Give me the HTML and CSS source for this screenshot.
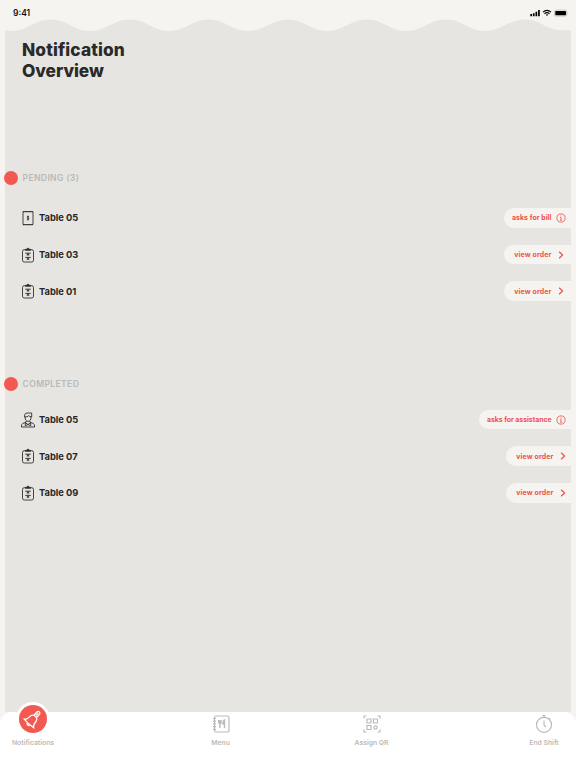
FILE: index.html
```html
<!DOCTYPE html>
<html lang="en">
<head>
  <meta charset="UTF-8">
  <title>Notification Overview</title>
  <link rel="stylesheet" href="styles.css">
</head>
<body>
  <!-- shared icons -->
  <svg class="sprite" xmlns="http://www.w3.org/2000/svg">
    <symbol id="order" viewBox="0 0 14 16">
      <rect x="1.5" y="2.7" width="11" height="12.3" rx="1.8"/>
      <path d="M4.300 3.200V2.400h1.500a1.200 1.200 0 0 1 2.400 0h1.500v.8z" fill="#303030"/>
      <path d="M4.200 6.200h5.600M4.200 10.400h5.600M5.700 8h2.600M5.700 12.200h2.600"/>
      <path d="M7 6.200v1.800M7 10.400v1.800" stroke-width="1.600"/>
    </symbol>
    <symbol id="info" viewBox="0 0 10 10">
      <circle cx="5" cy="5" r="4.100"/>
      <path d="M4.100 4.300H5v2.800M4.100 7.200h1.900M5 2.400v.9"/>
    </symbol>
    <symbol id="arrow" viewBox="0 0 10 10">
      <path d="M3.100 1.700 6.600 5 3.100 8.300" stroke-width="1.200"/>
    </symbol>
  </svg>

  <header class="status">
    <span class="time">9:41</span>
    <svg class="signals" width="39" height="8" viewBox="0 0 39 8">
      <path d="M.3 5h1.700v2.200H.3zM2.900 4.200h1.700v3H2.900zM5.500 2.700h1.700v4.500H5.500zM8.100 1.100h1.700v6.100H8.100z"/>
      <path class="wave" d="M13 3.100q4-3.500 8 0M14.500 4.700q2.500-2 5 0"/>
      <path d="M15.800 5.700q1.200-.9 2.400 0L17 7z"/>
      <rect class="case" x="24.500" y="1.100" width="12.300" height="6" rx="1.500"/>
      <rect x="25.300" y="1.900" width="10.700" height="4.400" rx=".7"/>
      <path class="cap" d="M37.400 3.200q1 .9 0 1.800z"/>
    </svg>
  </header>

  <main class="panel">
    <svg class="edge" width="566" height="12" viewBox="5 19 566 12">
      <path d="M5 31V30.200Q8 30.900 11.500 30.900C28.500 30.900 34 19.400 51 19.400S73 30.900 90 30.900 113 19.400 130 19.400 152 30.900 169 30.900 192 19.400 209 19.400 231 30.900 248 30.900 271 19.400 288 19.400 310 30.900 327 30.900 350 19.400 367 19.400 389 30.900 406 30.900 429 19.400 446 19.400 468 30.900 485 30.900 508 19.400 525 19.400 545 30.200 563 30.200H571V31z"/>
    </svg>
    <h1><span class="first">Notification</span><br>Overview</h1>

    <section class="pending">
      <h2>PENDING (3)</h2>
      <div class="row">
        <svg class="icon" viewBox="0 0 14 16">
          <path d="M2 1.600h10v13H2z"/>
          <path d="M2 1.600h10M2 14.600h10" stroke-width="1.400" stroke-dasharray="1 .7"/>
          <path d="M8 6.700Q6.200 6 6.200 7.200c0 .8 1.700.7 1.700 1.600Q7.800 9.900 6 9.200M7 5.700v4.800"/>
        </svg>
        <span class="table">Table 05</span>
        <a class="pill">asks for bill <svg><use href="#info"/></svg></a>
      </div>
      <div class="row">
        <svg class="icon"><use href="#order"/></svg>
        <span class="table">Table 03</span>
        <a class="pill view">view order <svg><use href="#arrow"/></svg></a>
      </div>
      <div class="row">
        <svg class="icon"><use href="#order"/></svg>
        <span class="table">Table 01</span>
        <a class="pill view">view order <svg><use href="#arrow"/></svg></a>
      </div>
    </section>

    <section class="completed">
      <h2>COMPLETED</h2>
      <div class="row">
        <svg class="icon" viewBox="0 0 14 16">
          <path d="M3.600 5.200V3.100Q4 1 6 1h4.700v4.200M3.600 4.900Q6.500 5.200 7.700 3.700q1 1.100 2.900 1M4.100 5c-.2 2.600 1.200 4.400 2.900 4.400S10.200 7.600 10 5"/>
          <path d="M5 8.900v1.500l-3 .8Q.400 11.800.400 15h13.200q0-3.200-1.600-3.800l-3-.8V8.900M4.300 10.800 7 12.500l2.700-1.700v3L7 12.500l-2.700 1.300z"/>
        </svg>
        <span class="table">Table 05</span>
        <a class="pill">asks for assistance <svg><use href="#info"/></svg></a>
      </div>
      <div class="row">
        <svg class="icon"><use href="#order"/></svg>
        <span class="table">Table 07</span>
        <a class="pill view slim">view order <svg><use href="#arrow"/></svg></a>
      </div>
      <div class="row">
        <svg class="icon"><use href="#order"/></svg>
        <span class="table">Table 09</span>
        <a class="pill view slim">view order <svg><use href="#arrow"/></svg></a>
      </div>
    </section>
  </main>

  <nav class="tabs">
    <a class="tab bell">
      <svg width="34" height="34" viewBox="0 0 34 34">
        <circle cx="17" cy="17" r="17" fill="#fff"/>
        <circle cx="17" cy="17" r="14" fill="#f15951"/>
        <g transform="translate(16.500 17.500) rotate(42)">
          <path d="M-6.300 5.300Q-4 3.500-4 .4C-4-2.800-2.500-4.300 0-4.300S4-2.800 4 .4Q4 3.500 6.300 5.300Q0 6.500-6.300 5.300zM-1.800 5.800a1.900 1.900 0 0 0 3.700 0M-1.700-4.500V-8.500a1.700 1.700 0 0 1 3.400 0v4M0-8.500v3"/>
        </g>
      </svg>
      <span>Notifications</span>
    </a>
    <a class="tab menu">
      <svg width="18" height="18" viewBox="0 0 18 18">
        <rect x="2.500" y="1" width="14.500" height="16" rx="1.500"/>
        <path d="M1 3.500h3M1 6.200h3M1 8.900h3M1 11.600h3M1 14.300h3"/>
        <path d="M6.700 5v2.500q0 1.200 1.200 1.200T9.100 7.500V5M7.900 5v8M12.500 13V5q-1.500.7-1.500 4h1.500" stroke-width="1.400"/>
      </svg>
      <span>Menu</span>
    </a>
    <a class="tab qr">
      <svg width="18" height="18" viewBox="0 0 18 18">
        <path d="M1 3.500V1h2.500M14.500 1H17v2.500M1 14.500V17h2.500M17 14.500V17h-2.500"/>
        <path d="M4 4h4v4H4zM10.500 4h4v4h-4zM4 10.500h4v4H4z"/>
        <circle cx="12.500" cy="12.500" r="1.700"/>
      </svg>
      <span>Assign QR</span>
    </a>
    <a class="tab shift">
      <svg width="18" height="18" viewBox="0 0 18 18">
        <circle cx="9" cy="9.800" r="7.500"/>
        <path d="M7.500.7h3M9 .7v1.700M9 5.500V10l2 2M14.200 4l1-1"/>
      </svg>
      <span>End Shift</span>
    </a>
  </nav>
</body>
</html>
```

FILE: styles.css
```css
* {
  box-sizing: border-box;
}
body {
  margin: 0;
  height: 768px;
  display: flex;
  flex-direction: column;
  background: #f5f4f0;
  font-family: Inter, "Open Sans", sans-serif;
  overflow: hidden;
}
svg {
  fill: none;
  flex: none;
  display: block;
}
.sprite {
  position: absolute;
  width: 0;
  height: 0;
}

/* status bar */
.status {
  height: 19px;
  padding: 7px 7px 0 13px;
  display: flex;
  justify-content: space-between;
}
.time {
  font-size: 8.5px;
  line-height: 12px;
  font-weight: 600;
  color: #111;
}
.signals {
  margin-top: 2px;
  fill: #000;
}
.signals .wave {
  fill: none;
  stroke: #000;
  stroke-width: 1.2;
}
.signals .case {
  fill: none;
  stroke: #aaa;
  stroke-width: .6;
}
.signals .cap {
  fill: #aaa;
}

/* panel */
.panel {
  flex: 1;
  margin: 0 5px;
  background: linear-gradient(#f5f4f0 12px, #e6e5e1 12px);
}
.edge {
  fill: #e6e5e1;
}
h1 {
  margin: 7.5px 0 0 17px;
  height: 42px;
  font-size: 17.3px;
  line-height: 21px;
  font-weight: 800;
  letter-spacing: -.05px;
  color: #2a2a2a;
}
h1 .first {
  letter-spacing: .12px;
}
h2 {
  margin: 0;
  height: 14px;
  display: flex;
  align-items: center;
  font-size: 8.6px;
  line-height: 14px;
  font-weight: 600;
  letter-spacing: .35px;
  color: #bab9b6;
}
h2::before {
  content: "";
  width: 14px;
  height: 14px;
  margin: 0 5px 0 -1.5px;
  border-radius: 50%;
  background: #f15951;
}
.pending {
  margin-top: 90.5px;
}
.completed {
  margin-top: 67px;
}
.row {
  height: 36.7px;
  padding-left: 15.5px;
  display: flex;
  align-items: center;
}
.pending h2 + .row {
  margin-top: 14.5px;
}
.completed h2 + .row {
  margin-top: 10.7px;
}
.icon {
  width: 14px;
  height: 16px;
  stroke: #303030;
  stroke-width: .9;
}
.table {
  margin-left: 4.5px;
  font-size: 9.3px;
  font-weight: 700;
  color: #262626;
}
.pill {
  margin-left: auto;
  width: 67px;
  height: 19.7px;
  padding-right: 5px;
  display: flex;
  align-items: center;
  justify-content: flex-end;
  border-radius: 10px 0 0 10px;
  background: #f5f4f0;
  color: #ef514b;
  font-size: 6.9px;
  font-weight: 700;
  letter-spacing: .07px;
  white-space: nowrap;
}
.pill svg {
  width: 10px;
  height: 10px;
  margin-left: 4.5px;
  stroke: #ef514b;
  stroke-width: .8;
}
.pill.view {
  letter-spacing: .16px;
}
.completed h2 + .row .pill {
  width: 92px;
  letter-spacing: -.03px;
}
.pill.slim {
  width: 65px;
  padding-right: 3px;
}

/* bottom tabs */
.tabs {
  height: 56.5px;
  display: flex;
  border-radius: 12px 12px 0 0;
  background: #fff;
}
.tab {
  width: 60px;
  display: flex;
  flex-direction: column;
  align-items: center;
  color: #bcbbb7;
  font-size: 6.8px;
  font-weight: 600;
}
.tab svg {
  height: 18px;
  margin-top: 3.5px;
  stroke: #bcbbb7;
  stroke-width: 1.2;
}
.tab span {
  margin-top: 5px;
  line-height: 9px;
}
.tab.bell {
  margin-left: 3px;
}
.tab.bell svg {
  height: 34px;
  margin-top: -9.5px;
  stroke: none;
}
.tab.bell path {
  stroke: #fff;
  stroke-width: 1.3;
}
.tab.bell span {
  margin-top: 2px;
}
.menu {
  margin-left: 127.5px;
}
.qr {
  margin-left: 91px;
}
.shift {
  margin-left: 112.5px;
}
```
